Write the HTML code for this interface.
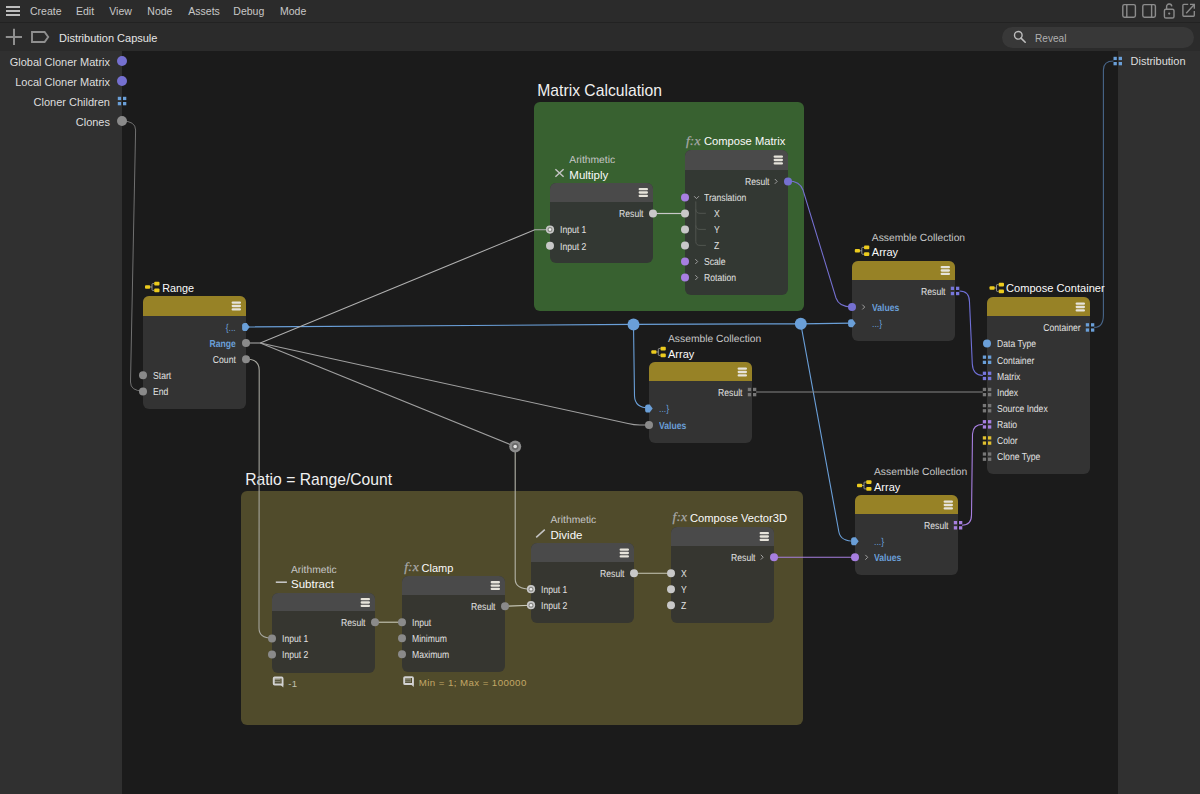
<!DOCTYPE html><html><head><meta charset="utf-8"><style>
html,body{margin:0;padding:0;width:1200px;height:794px;overflow:hidden;background:#1b1b1b;font-family:"Liberation Sans", sans-serif;}
.t{position:absolute;white-space:nowrap;line-height:1;}
.r{position:absolute;}
svg{position:absolute;left:0;top:0;}
</style></head><body>
<div class="r" style="left:0.00px;top:0.00px;width:1200.00px;height:22.00px;background:#2b2b2b;"></div>
<div class="r" style="left:0.00px;top:22.00px;width:1200.00px;height:1.00px;background:#222222;"></div>
<div class="r" style="left:0.00px;top:23.00px;width:1200.00px;height:28.00px;background:#2b2b2b;"></div>
<div class="r" style="left:0.00px;top:51.00px;width:122.00px;height:743.00px;background:#303030;"></div>
<div class="r" style="left:1118.00px;top:51.00px;width:82.00px;height:743.00px;background:#303030;"></div>
<div class="r" style="left:6.00px;top:6.00px;width:14.00px;height:2.00px;background:#bdbdbd;"></div>
<div class="r" style="left:6.00px;top:10.00px;width:14.00px;height:2.00px;background:#bdbdbd;"></div>
<div class="r" style="left:6.00px;top:14.00px;width:14.00px;height:2.00px;background:#bdbdbd;"></div>
<div class="t" style="left:30.00px;top:6.11px;font-size:10.5px;color:#c8c8c8;font-weight:normal;">Create</div>
<div class="t" style="left:76.00px;top:6.11px;font-size:10.5px;color:#c8c8c8;font-weight:normal;">Edit</div>
<div class="t" style="left:109.30px;top:6.11px;font-size:10.5px;color:#c8c8c8;font-weight:normal;">View</div>
<div class="t" style="left:147.30px;top:6.11px;font-size:10.5px;color:#c8c8c8;font-weight:normal;">Node</div>
<div class="t" style="left:188.30px;top:6.11px;font-size:10.5px;color:#c8c8c8;font-weight:normal;">Assets</div>
<div class="t" style="left:233.30px;top:6.11px;font-size:10.5px;color:#c8c8c8;font-weight:normal;">Debug</div>
<div class="t" style="left:280.00px;top:6.11px;font-size:10.5px;color:#c8c8c8;font-weight:normal;">Mode</div>
<div class="t" style="left:59.00px;top:32.69px;font-size:11px;color:#e6e6e6;font-weight:normal;">Distribution Capsule</div>
<div class="r" style="left:534px;top:102px;width:270px;height:209px;background:#386130;border-radius:6px"></div>
<div class="t" style="left:537.30px;top:82.71px;font-size:15.7px;color:#f0f0f0;font-weight:normal;">Matrix Calculation</div>
<div class="r" style="left:241px;top:491px;width:562px;height:234px;background:#504b2b;border-radius:6px"></div>
<div class="t" style="left:245.20px;top:471.71px;font-size:15.7px;color:#f0f0f0;font-weight:normal;">Ratio = Range/Count</div>
<div class="t" style="right:1090.00px;top:56.69px;font-size:11px;color:#dedede;font-weight:normal;text-align:right;">Global Cloner Matrix</div>
<div class="t" style="right:1090.00px;top:76.69px;font-size:11px;color:#dedede;font-weight:normal;text-align:right;">Local Cloner Matrix</div>
<div class="t" style="right:1090.00px;top:96.69px;font-size:11px;color:#dedede;font-weight:normal;text-align:right;">Cloner Children</div>
<div class="t" style="right:1090.00px;top:116.69px;font-size:11px;color:#dedede;font-weight:normal;text-align:right;">Clones</div>
<div class="t" style="left:1130.50px;top:56.49px;font-size:11px;color:#dedede;font-weight:normal;">Distribution</div>
<div class="r" style="left:1002px;top:27px;width:192px;height:21px;background:#383838;border-radius:11px"></div>
<div class="t" style="left:1035.00px;top:33.65px;font-size:10.1px;color:#b0b0b0;font-weight:normal;">Reveal</div>
<svg width="1200" height="794" viewBox="0 0 1200 794"><path d="M122 121 Q135.6 121 135.6 130 L130.5 382 Q130.5 391 143 391" stroke="#707070" stroke-width="1.0" fill="none" opacity="1"/><path d="M246 327 L633.5 324.4 L800.8 323.8 L852 323.2" stroke="#6a9fd8" stroke-width="1.2" fill="none" opacity="1"/><path d="M633.5 324.4 L634.5 396 Q635 408 649 408" stroke="#6a9fd8" stroke-width="1.1" fill="none" opacity="1"/><path d="M800.8 323.8 L838.9 532 Q840.5 541.3 855 541.3" stroke="#6a9fd8" stroke-width="1.1" fill="none" opacity="1"/><path d="M246 343 L260.3 343 L534.8 229.8 L550 229.8" stroke="#b0b0b0" stroke-width="1.1" fill="none" opacity="1"/><path d="M260.3 343 L628 423.5 Q634 425 640 425 L649 425" stroke="#a0a0a0" stroke-width="1.05" fill="none" opacity="1"/><path d="M260.3 343 L515.2 446.5" stroke="#a0a0a0" stroke-width="1.1" fill="none" opacity="1"/><path d="M246 359 Q259.2 359 259.2 370 L259 628 Q259 638.2 272 638.2" stroke="#a8a8a0" stroke-width="1.05" fill="none" opacity="1"/><path d="M515.2 446.5 L515.2 579 Q515.2 589.2 531 589.2" stroke="#b4b4a8" stroke-width="1.1" fill="none" opacity="1"/><path d="M653 213.5 L685 213.5" stroke="#c8c8c8" stroke-width="1.2" fill="none" opacity="1"/><path d="M788 181 Q800 181 803 190 L836 298 Q839 307 852 307" stroke="#7570d0" stroke-width="1.05" fill="none" opacity="1"/><path d="M959.5 291 Q969.5 291 969.5 302 L972.3 364 Q973 375.5 982.8 375.5" stroke="#7070d8" stroke-width="1.1" fill="none" opacity="1"/><path d="M756 392 L982.8 392" stroke="#858585" stroke-width="1.1" fill="none" opacity="1"/><path d="M962 525.2 Q971.5 525.2 971.5 515 L972.5 434 Q973 424.4 982.8 424.4" stroke="#a77fe0" stroke-width="1.1" fill="none" opacity="1"/><path d="M1094.2 327.4 Q1103.4 327.4 1103.4 315 L1103.4 70 Q1103.4 61 1113.5 61" stroke="#48668a" stroke-width="1.1" fill="none" opacity="1"/><path d="M374.5 622.2 L402 622.2" stroke="#c8c8b8" stroke-width="1.1" fill="none" opacity="1"/><path d="M505 606.2 L531 605.2" stroke="#c8c8b8" stroke-width="1.1" fill="none" opacity="1"/><path d="M634 573.2 L671 573.2" stroke="#c8c8b8" stroke-width="1.1" fill="none" opacity="1"/><path d="M773 557.3 L855 557.3" stroke="#a77fe0" stroke-width="1.1" fill="none" opacity="1"/></svg>
<div class="r" style="left:143px;top:296px;width:103px;height:112.50px;background:#333333;border-radius:6px;overflow:hidden"><div style="height:20.00px;background:#978226"></div></div>
<div class="t" style="right:964.00px;top:323.89px;font-size:10.05px;color:#6a9fd8;font-weight:normal;text-align:right;transform:scaleX(0.856);transform-origin:right center;text-rendering:geometricPrecision;">{...</div>
<div class="t" style="right:964.00px;top:339.99px;font-size:10.05px;color:#6a9fd8;font-weight:bold;text-align:right;transform:scaleX(0.856);transform-origin:right center;text-rendering:geometricPrecision;">Range</div>
<div class="t" style="right:964.00px;top:356.09px;font-size:10.05px;color:#e2e2e2;font-weight:normal;text-align:right;transform:scaleX(0.856);transform-origin:right center;text-rendering:geometricPrecision;">Count</div>
<div class="t" style="left:153.00px;top:372.19px;font-size:10.05px;color:#e2e2e2;font-weight:normal;transform:scaleX(0.856);transform-origin:left center;text-rendering:geometricPrecision;">Start</div>
<div class="t" style="left:153.00px;top:388.29px;font-size:10.05px;color:#e2e2e2;font-weight:normal;transform:scaleX(0.856);transform-origin:left center;text-rendering:geometricPrecision;">End</div>
<div class="r" style="left:550px;top:182.5px;width:103px;height:80.00px;background:#333833;border-radius:6px;overflow:hidden"><div style="height:19.50px;background:#4a4a4a"></div></div>
<div class="t" style="right:557.00px;top:210.39px;font-size:10.05px;color:#e2e2e2;font-weight:normal;text-align:right;transform:scaleX(0.856);transform-origin:right center;text-rendering:geometricPrecision;">Result</div>
<div class="t" style="left:560.00px;top:226.49px;font-size:10.05px;color:#e2e2e2;font-weight:normal;transform:scaleX(0.856);transform-origin:left center;text-rendering:geometricPrecision;">Input 1</div>
<div class="t" style="left:560.00px;top:242.59px;font-size:10.05px;color:#e2e2e2;font-weight:normal;transform:scaleX(0.856);transform-origin:left center;text-rendering:geometricPrecision;">Input 2</div>
<div class="r" style="left:685px;top:150px;width:103px;height:145.00px;background:#333833;border-radius:6px;overflow:hidden"><div style="height:19.60px;background:#4a4a4a"></div></div>
<div class="t" style="right:431.00px;top:178.29px;font-size:10.05px;color:#e2e2e2;font-weight:normal;text-align:right;transform:scaleX(0.856);transform-origin:right center;text-rendering:geometricPrecision;">Result</div>
<div class="t" style="left:704.00px;top:194.32px;font-size:10.05px;color:#e2e2e2;font-weight:normal;transform:scaleX(0.856);transform-origin:left center;text-rendering:geometricPrecision;">Translation</div>
<div class="t" style="left:713.50px;top:210.35px;font-size:10.05px;color:#e2e2e2;font-weight:normal;transform:scaleX(0.856);transform-origin:left center;text-rendering:geometricPrecision;">X</div>
<div class="t" style="left:713.50px;top:226.38px;font-size:10.05px;color:#e2e2e2;font-weight:normal;transform:scaleX(0.856);transform-origin:left center;text-rendering:geometricPrecision;">Y</div>
<div class="t" style="left:713.50px;top:242.41px;font-size:10.05px;color:#e2e2e2;font-weight:normal;transform:scaleX(0.856);transform-origin:left center;text-rendering:geometricPrecision;">Z</div>
<div class="t" style="left:704.00px;top:258.44px;font-size:10.05px;color:#e2e2e2;font-weight:normal;transform:scaleX(0.856);transform-origin:left center;text-rendering:geometricPrecision;">Scale</div>
<div class="t" style="left:704.00px;top:274.47px;font-size:10.05px;color:#e2e2e2;font-weight:normal;transform:scaleX(0.856);transform-origin:left center;text-rendering:geometricPrecision;">Rotation</div>
<div class="r" style="left:852px;top:260.5px;width:103px;height:80.00px;background:#333333;border-radius:6px;overflow:hidden"><div style="height:19.50px;background:#978226"></div></div>
<div class="t" style="right:254.50px;top:287.79px;font-size:10.05px;color:#e2e2e2;font-weight:normal;text-align:right;transform:scaleX(0.856);transform-origin:right center;text-rendering:geometricPrecision;">Result</div>
<div class="t" style="left:871.50px;top:303.94px;font-size:10.05px;color:#6a9fd8;font-weight:bold;transform:scaleX(0.856);transform-origin:left center;text-rendering:geometricPrecision;">Values</div>
<div class="t" style="left:871.50px;top:320.09px;font-size:10.05px;color:#6a9fd8;font-weight:normal;transform:scaleX(0.856);transform-origin:left center;text-rendering:geometricPrecision;">...}</div>
<div class="r" style="left:987px;top:297px;width:103px;height:176.50px;background:#333333;border-radius:6px;overflow:hidden"><div style="height:19.00px;background:#978226"></div></div>
<div class="t" style="right:119.50px;top:324.29px;font-size:10.05px;color:#e2e2e2;font-weight:normal;text-align:right;transform:scaleX(0.856);transform-origin:right center;text-rendering:geometricPrecision;">Container</div>
<div class="t" style="left:997.00px;top:340.44px;font-size:10.05px;color:#e2e2e2;font-weight:normal;transform:scaleX(0.856);transform-origin:left center;text-rendering:geometricPrecision;">Data Type</div>
<div class="t" style="left:997.00px;top:356.59px;font-size:10.05px;color:#e2e2e2;font-weight:normal;transform:scaleX(0.856);transform-origin:left center;text-rendering:geometricPrecision;">Container</div>
<div class="t" style="left:997.00px;top:372.74px;font-size:10.05px;color:#e2e2e2;font-weight:normal;transform:scaleX(0.856);transform-origin:left center;text-rendering:geometricPrecision;">Matrix</div>
<div class="t" style="left:997.00px;top:388.89px;font-size:10.05px;color:#e2e2e2;font-weight:normal;transform:scaleX(0.856);transform-origin:left center;text-rendering:geometricPrecision;">Index</div>
<div class="t" style="left:997.00px;top:405.04px;font-size:10.05px;color:#e2e2e2;font-weight:normal;transform:scaleX(0.856);transform-origin:left center;text-rendering:geometricPrecision;">Source Index</div>
<div class="t" style="left:997.00px;top:421.19px;font-size:10.05px;color:#e2e2e2;font-weight:normal;transform:scaleX(0.856);transform-origin:left center;text-rendering:geometricPrecision;">Ratio</div>
<div class="t" style="left:997.00px;top:437.34px;font-size:10.05px;color:#e2e2e2;font-weight:normal;transform:scaleX(0.856);transform-origin:left center;text-rendering:geometricPrecision;">Color</div>
<div class="t" style="left:997.00px;top:453.49px;font-size:10.05px;color:#e2e2e2;font-weight:normal;transform:scaleX(0.856);transform-origin:left center;text-rendering:geometricPrecision;">Clone Type</div>
<div class="r" style="left:649px;top:362px;width:103px;height:80.60px;background:#333333;border-radius:6px;overflow:hidden"><div style="height:19.20px;background:#978226"></div></div>
<div class="t" style="right:457.50px;top:388.89px;font-size:10.05px;color:#e2e2e2;font-weight:normal;text-align:right;transform:scaleX(0.856);transform-origin:right center;text-rendering:geometricPrecision;">Result</div>
<div class="t" style="left:658.50px;top:405.39px;font-size:10.05px;color:#6a9fd8;font-weight:normal;transform:scaleX(0.856);transform-origin:left center;text-rendering:geometricPrecision;">...}</div>
<div class="t" style="left:658.50px;top:421.89px;font-size:10.05px;color:#6a9fd8;font-weight:bold;transform:scaleX(0.856);transform-origin:left center;text-rendering:geometricPrecision;">Values</div>
<div class="r" style="left:855px;top:495px;width:103px;height:80.00px;background:#333333;border-radius:6px;overflow:hidden"><div style="height:19.00px;background:#978226"></div></div>
<div class="t" style="right:251.50px;top:522.09px;font-size:10.05px;color:#e2e2e2;font-weight:normal;text-align:right;transform:scaleX(0.856);transform-origin:right center;text-rendering:geometricPrecision;">Result</div>
<div class="t" style="left:874.00px;top:538.14px;font-size:10.05px;color:#6a9fd8;font-weight:normal;transform:scaleX(0.856);transform-origin:left center;text-rendering:geometricPrecision;">...}</div>
<div class="t" style="left:874.00px;top:554.19px;font-size:10.05px;color:#6a9fd8;font-weight:bold;transform:scaleX(0.856);transform-origin:left center;text-rendering:geometricPrecision;">Values</div>
<div class="r" style="left:272px;top:592.5px;width:103px;height:80.10px;background:#363630;border-radius:6px;overflow:hidden"><div style="height:18.70px;background:#4a4a4a"></div></div>
<div class="t" style="right:835.00px;top:619.09px;font-size:10.05px;color:#e2e2e2;font-weight:normal;text-align:right;transform:scaleX(0.856);transform-origin:right center;text-rendering:geometricPrecision;">Result</div>
<div class="t" style="left:282.00px;top:635.29px;font-size:10.05px;color:#e2e2e2;font-weight:normal;transform:scaleX(0.856);transform-origin:left center;text-rendering:geometricPrecision;">Input 1</div>
<div class="t" style="left:282.00px;top:651.49px;font-size:10.05px;color:#e2e2e2;font-weight:normal;transform:scaleX(0.856);transform-origin:left center;text-rendering:geometricPrecision;">Input 2</div>
<div class="r" style="left:402px;top:575.6px;width:103px;height:96.00px;background:#363630;border-radius:6px;overflow:hidden"><div style="height:19.40px;background:#4a4a4a"></div></div>
<div class="t" style="right:705.00px;top:603.09px;font-size:10.05px;color:#e2e2e2;font-weight:normal;text-align:right;transform:scaleX(0.856);transform-origin:right center;text-rendering:geometricPrecision;">Result</div>
<div class="t" style="left:412.00px;top:619.14px;font-size:10.05px;color:#e2e2e2;font-weight:normal;transform:scaleX(0.856);transform-origin:left center;text-rendering:geometricPrecision;">Input</div>
<div class="t" style="left:412.00px;top:635.19px;font-size:10.05px;color:#e2e2e2;font-weight:normal;transform:scaleX(0.856);transform-origin:left center;text-rendering:geometricPrecision;">Minimum</div>
<div class="t" style="left:412.00px;top:651.24px;font-size:10.05px;color:#e2e2e2;font-weight:normal;transform:scaleX(0.856);transform-origin:left center;text-rendering:geometricPrecision;">Maximum</div>
<div class="r" style="left:531px;top:543px;width:103px;height:80.00px;background:#363630;border-radius:6px;overflow:hidden"><div style="height:19.00px;background:#4a4a4a"></div></div>
<div class="t" style="right:576.00px;top:570.09px;font-size:10.05px;color:#e2e2e2;font-weight:normal;text-align:right;transform:scaleX(0.856);transform-origin:right center;text-rendering:geometricPrecision;">Result</div>
<div class="t" style="left:541.00px;top:586.09px;font-size:10.05px;color:#e2e2e2;font-weight:normal;transform:scaleX(0.856);transform-origin:left center;text-rendering:geometricPrecision;">Input 1</div>
<div class="t" style="left:541.00px;top:602.09px;font-size:10.05px;color:#e2e2e2;font-weight:normal;transform:scaleX(0.856);transform-origin:left center;text-rendering:geometricPrecision;">Input 2</div>
<div class="r" style="left:671px;top:526.5px;width:103px;height:96.50px;background:#363630;border-radius:6px;overflow:hidden"><div style="height:19.50px;background:#4a4a4a"></div></div>
<div class="t" style="right:445.00px;top:554.09px;font-size:10.05px;color:#e2e2e2;font-weight:normal;text-align:right;transform:scaleX(0.856);transform-origin:right center;text-rendering:geometricPrecision;">Result</div>
<div class="t" style="left:681.00px;top:570.14px;font-size:10.05px;color:#e2e2e2;font-weight:normal;transform:scaleX(0.856);transform-origin:left center;text-rendering:geometricPrecision;">X</div>
<div class="t" style="left:681.00px;top:586.19px;font-size:10.05px;color:#e2e2e2;font-weight:normal;transform:scaleX(0.856);transform-origin:left center;text-rendering:geometricPrecision;">Y</div>
<div class="t" style="left:681.00px;top:602.24px;font-size:10.05px;color:#e2e2e2;font-weight:normal;transform:scaleX(0.856);transform-origin:left center;text-rendering:geometricPrecision;">Z</div>
<div class="t" style="left:162.30px;top:283.06px;font-size:10.8px;color:#fafafa;font-weight:normal;">Range</div>
<div class="t" style="left:569.30px;top:155.53px;font-size:10.3px;color:#c6c6c6;font-weight:normal;text-rendering:geometricPrecision;">Arithmetic</div>
<div class="t" style="left:569.30px;top:170.27px;font-size:11.5px;color:#fafafa;font-weight:normal;">Multiply</div>
<div class="t" style="left:703.90px;top:136.32px;font-size:11.2px;color:#fafafa;font-weight:normal;">Compose Matrix</div>
<div class="t" style="left:871.80px;top:233.83px;font-size:10.3px;color:#c6c6c6;font-weight:normal;text-rendering:geometricPrecision;">Assemble Collection</div>
<div class="t" style="left:871.80px;top:246.69px;font-size:11px;color:#fafafa;font-weight:normal;">Array</div>
<div class="t" style="left:1006.00px;top:283.10px;font-size:11.1px;color:#fafafa;font-weight:normal;">Compose Container</div>
<div class="t" style="left:668.00px;top:335.33px;font-size:10.3px;color:#c6c6c6;font-weight:normal;text-rendering:geometricPrecision;">Assemble Collection</div>
<div class="t" style="left:668.00px;top:348.69px;font-size:11px;color:#fafafa;font-weight:normal;">Array</div>
<div class="t" style="left:874.00px;top:468.33px;font-size:10.3px;color:#c6c6c6;font-weight:normal;text-rendering:geometricPrecision;">Assemble Collection</div>
<div class="t" style="left:874.00px;top:481.89px;font-size:11px;color:#fafafa;font-weight:normal;">Array</div>
<div class="t" style="left:291.00px;top:565.53px;font-size:10.3px;color:#c6c6c6;font-weight:normal;text-rendering:geometricPrecision;">Arithmetic</div>
<div class="t" style="left:291.00px;top:579.27px;font-size:11.5px;color:#fafafa;font-weight:normal;">Subtract</div>
<div class="t" style="left:421.50px;top:562.89px;font-size:11px;color:#fafafa;font-weight:normal;">Clamp</div>
<div class="t" style="left:550.50px;top:515.53px;font-size:10.3px;color:#c6c6c6;font-weight:normal;text-rendering:geometricPrecision;">Arithmetic</div>
<div class="t" style="left:550.50px;top:530.47px;font-size:11.5px;color:#fafafa;font-weight:normal;">Divide</div>
<div class="t" style="left:690.00px;top:513.12px;font-size:11.2px;color:#fafafa;font-weight:normal;">Compose Vector3D</div>
<div class="t" style="left:288.20px;top:678.67px;font-size:9.6px;color:#c0c0b0;font-weight:normal;letter-spacing:0.4px;">-1</div>
<div class="t" style="left:418.80px;top:678.39px;font-size:9.7px;color:#c2a766;font-weight:normal;letter-spacing:0.42px;">Min = 1; Max = 100000</div>
<div class="t" style="left:686.00px;top:133.87px;font-size:13.5px;color:#a8a8a8;font-weight:normal;font-family:'Liberation Serif',serif;font-style:italic;letter-spacing:0.1px;-webkit-text-stroke:0.25px #a8a8a8;">f:x</div>
<div class="t" style="left:404.20px;top:559.87px;font-size:13.5px;color:#a8a8a8;font-weight:normal;font-family:'Liberation Serif',serif;font-style:italic;letter-spacing:0.1px;-webkit-text-stroke:0.25px #a8a8a8;">f:x</div>
<div class="t" style="left:672.60px;top:510.47px;font-size:13.5px;color:#a8a8a8;font-weight:normal;font-family:'Liberation Serif',serif;font-style:italic;letter-spacing:0.1px;-webkit-text-stroke:0.25px #a8a8a8;">f:x</div>
<svg width="1200" height="794" viewBox="0 0 1200 794"><rect x="231.60" y="301.50" width="9.4" height="2.3" rx="1.1" fill="#e6e3da"/><rect x="231.60" y="304.85" width="9.4" height="2.3" rx="1.1" fill="#e6e3da"/><rect x="231.60" y="308.20" width="9.4" height="2.3" rx="1.1" fill="#e6e3da"/><path d="M249.70 327.00 L246.70 331.00 H244.70 Q242.10 331.00 242.10 328.40 V325.60 Q242.10 323.00 244.70 323.00 H246.70 Z" fill="#6a9fd8"/><circle cx="246" cy="343.1" r="4" fill="#8a8a8a"/><circle cx="246" cy="359.2" r="4" fill="#8a8a8a"/><circle cx="143" cy="375.3" r="4" fill="#8a8a8a"/><circle cx="143" cy="391.4" r="4" fill="#8a8a8a"/><rect x="638.60" y="188.00" width="9.4" height="2.3" rx="1.1" fill="#e6e3da"/><rect x="638.60" y="191.35" width="9.4" height="2.3" rx="1.1" fill="#e6e3da"/><rect x="638.60" y="194.70" width="9.4" height="2.3" rx="1.1" fill="#e6e3da"/><circle cx="653" cy="213.5" r="4" fill="#c8c8c8"/><circle cx="550" cy="229.6" r="4.1" fill="#c8c8c8"/><circle cx="550" cy="229.6" r="2.5" fill="#8a8a86"/><circle cx="550" cy="229.6" r="1.3" fill="#f0f0f0"/><circle cx="550" cy="245.7" r="4" fill="#c8c8c8"/><rect x="773.60" y="155.50" width="9.4" height="2.3" rx="1.1" fill="#e6e3da"/><rect x="773.60" y="158.85" width="9.4" height="2.3" rx="1.1" fill="#e6e3da"/><rect x="773.60" y="162.20" width="9.4" height="2.3" rx="1.1" fill="#e6e3da"/><path d="M774.8 179.0 L777.2 181.4 L774.8 183.8" stroke="#a0a0a0" stroke-width="1" fill="none"/><circle cx="788" cy="181.4" r="4" fill="#7570d0"/><path d="M694.1 196.23000000000002 L696.5 198.63 L698.9 196.23000000000002" stroke="#a0a0a0" stroke-width="1" fill="none"/><circle cx="685" cy="197.43" r="4" fill="#a77fe0"/><circle cx="685" cy="213.46" r="4" fill="#c8c8c8"/><circle cx="685" cy="229.49" r="4" fill="#c8c8c8"/><circle cx="685" cy="245.52" r="4" fill="#c8c8c8"/><path d="M695.3 259.15000000000003 L697.7 261.55 L695.3 263.95" stroke="#a0a0a0" stroke-width="1" fill="none"/><circle cx="685" cy="261.55" r="4" fill="#a77fe0"/><path d="M695.3 275.18 L697.7 277.58 L695.3 279.97999999999996" stroke="#a0a0a0" stroke-width="1" fill="none"/><circle cx="685" cy="277.58" r="4" fill="#a77fe0"/><rect x="940.60" y="266.00" width="9.4" height="2.3" rx="1.1" fill="#e6e3da"/><rect x="940.60" y="269.35" width="9.4" height="2.3" rx="1.1" fill="#e6e3da"/><rect x="940.60" y="272.70" width="9.4" height="2.3" rx="1.1" fill="#e6e3da"/><rect x="950.80" y="286.70" width="3.3" height="3.3" fill="#7777dd"/><rect x="950.80" y="291.90" width="3.3" height="3.3" fill="#7777dd"/><rect x="956.00" y="286.70" width="3.3" height="3.3" fill="#7777dd"/><rect x="956.00" y="291.90" width="3.3" height="3.3" fill="#7777dd"/><path d="M862.3 304.65000000000003 L864.7 307.05 L862.3 309.45" stroke="#a0a0a0" stroke-width="1" fill="none"/><circle cx="852" cy="307.05" r="4" fill="#7570d0"/><path d="M855.70 323.20 L852.70 327.20 H850.70 Q848.10 327.20 848.10 324.60 V321.80 Q848.10 319.20 850.70 319.20 H852.70 Z" fill="#6a9fd8"/><rect x="1075.60" y="302.50" width="9.4" height="2.3" rx="1.1" fill="#e6e3da"/><rect x="1075.60" y="305.85" width="9.4" height="2.3" rx="1.1" fill="#e6e3da"/><rect x="1075.60" y="309.20" width="9.4" height="2.3" rx="1.1" fill="#e6e3da"/><rect x="1085.80" y="323.20" width="3.3" height="3.3" fill="#6a9fd8"/><rect x="1085.80" y="328.40" width="3.3" height="3.3" fill="#6a9fd8"/><rect x="1091.00" y="323.20" width="3.3" height="3.3" fill="#6a9fd8"/><rect x="1091.00" y="328.40" width="3.3" height="3.3" fill="#6a9fd8"/><circle cx="987" cy="343.55" r="4" fill="#6a9fd8"/><rect x="982.80" y="355.50" width="3.3" height="3.3" fill="#6a9fd8"/><rect x="982.80" y="360.70" width="3.3" height="3.3" fill="#6a9fd8"/><rect x="988.00" y="355.50" width="3.3" height="3.3" fill="#6a9fd8"/><rect x="988.00" y="360.70" width="3.3" height="3.3" fill="#6a9fd8"/><rect x="982.80" y="371.65" width="3.3" height="3.3" fill="#7777dd"/><rect x="982.80" y="376.85" width="3.3" height="3.3" fill="#7777dd"/><rect x="988.00" y="371.65" width="3.3" height="3.3" fill="#7777dd"/><rect x="988.00" y="376.85" width="3.3" height="3.3" fill="#7777dd"/><rect x="982.80" y="387.80" width="3.3" height="3.3" fill="#777777"/><rect x="982.80" y="393.00" width="3.3" height="3.3" fill="#777777"/><rect x="988.00" y="387.80" width="3.3" height="3.3" fill="#777777"/><rect x="988.00" y="393.00" width="3.3" height="3.3" fill="#777777"/><rect x="982.80" y="403.95" width="3.3" height="3.3" fill="#777777"/><rect x="982.80" y="409.15" width="3.3" height="3.3" fill="#777777"/><rect x="988.00" y="403.95" width="3.3" height="3.3" fill="#777777"/><rect x="988.00" y="409.15" width="3.3" height="3.3" fill="#777777"/><rect x="982.80" y="420.10" width="3.3" height="3.3" fill="#a77fe0"/><rect x="982.80" y="425.30" width="3.3" height="3.3" fill="#a77fe0"/><rect x="988.00" y="420.10" width="3.3" height="3.3" fill="#a77fe0"/><rect x="988.00" y="425.30" width="3.3" height="3.3" fill="#a77fe0"/><rect x="982.80" y="436.25" width="3.3" height="3.3" fill="#e0c030"/><rect x="982.80" y="441.45" width="3.3" height="3.3" fill="#e0c030"/><rect x="988.00" y="436.25" width="3.3" height="3.3" fill="#e0c030"/><rect x="988.00" y="441.45" width="3.3" height="3.3" fill="#e0c030"/><rect x="982.80" y="452.40" width="3.3" height="3.3" fill="#777777"/><rect x="982.80" y="457.60" width="3.3" height="3.3" fill="#777777"/><rect x="988.00" y="452.40" width="3.3" height="3.3" fill="#777777"/><rect x="988.00" y="457.60" width="3.3" height="3.3" fill="#777777"/><rect x="737.60" y="367.50" width="9.4" height="2.3" rx="1.1" fill="#e6e3da"/><rect x="737.60" y="370.85" width="9.4" height="2.3" rx="1.1" fill="#e6e3da"/><rect x="737.60" y="374.20" width="9.4" height="2.3" rx="1.1" fill="#e6e3da"/><rect x="747.80" y="387.80" width="3.3" height="3.3" fill="#777777"/><rect x="747.80" y="393.00" width="3.3" height="3.3" fill="#777777"/><rect x="753.00" y="387.80" width="3.3" height="3.3" fill="#777777"/><rect x="753.00" y="393.00" width="3.3" height="3.3" fill="#777777"/><path d="M652.70 408.50 L649.70 412.50 H647.70 Q645.10 412.50 645.10 409.90 V407.10 Q645.10 404.50 647.70 404.50 H649.70 Z" fill="#6a9fd8"/><circle cx="649" cy="425.0" r="4" fill="#8a8a8a"/><rect x="943.60" y="500.50" width="9.4" height="2.3" rx="1.1" fill="#e6e3da"/><rect x="943.60" y="503.85" width="9.4" height="2.3" rx="1.1" fill="#e6e3da"/><rect x="943.60" y="507.20" width="9.4" height="2.3" rx="1.1" fill="#e6e3da"/><rect x="953.80" y="521.00" width="3.3" height="3.3" fill="#a77fe0"/><rect x="953.80" y="526.20" width="3.3" height="3.3" fill="#a77fe0"/><rect x="959.00" y="521.00" width="3.3" height="3.3" fill="#a77fe0"/><rect x="959.00" y="526.20" width="3.3" height="3.3" fill="#a77fe0"/><path d="M858.70 541.25 L855.70 545.25 H853.70 Q851.10 545.25 851.10 542.65 V539.85 Q851.10 537.25 853.70 537.25 H855.70 Z" fill="#6a9fd8"/><path d="M865.3 554.9 L867.7 557.3 L865.3 559.6999999999999" stroke="#a0a0a0" stroke-width="1" fill="none"/><circle cx="855" cy="557.3" r="4" fill="#a77fe0"/><rect x="360.60" y="598.00" width="9.4" height="2.3" rx="1.1" fill="#e6e3da"/><rect x="360.60" y="601.35" width="9.4" height="2.3" rx="1.1" fill="#e6e3da"/><rect x="360.60" y="604.70" width="9.4" height="2.3" rx="1.1" fill="#e6e3da"/><circle cx="375" cy="622.2" r="4" fill="#8a8a8a"/><circle cx="272" cy="638.4" r="4" fill="#8a8a8a"/><circle cx="272" cy="654.6" r="4" fill="#8a8a8a"/><rect x="490.60" y="581.10" width="9.4" height="2.3" rx="1.1" fill="#e6e3da"/><rect x="490.60" y="584.45" width="9.4" height="2.3" rx="1.1" fill="#e6e3da"/><rect x="490.60" y="587.80" width="9.4" height="2.3" rx="1.1" fill="#e6e3da"/><circle cx="505" cy="606.2" r="4" fill="#8a8a8a"/><circle cx="402" cy="622.25" r="4" fill="#8a8a8a"/><circle cx="402" cy="638.3" r="4" fill="#8a8a8a"/><circle cx="402" cy="654.35" r="4" fill="#8a8a8a"/><rect x="619.60" y="548.50" width="9.4" height="2.3" rx="1.1" fill="#e6e3da"/><rect x="619.60" y="551.85" width="9.4" height="2.3" rx="1.1" fill="#e6e3da"/><rect x="619.60" y="555.20" width="9.4" height="2.3" rx="1.1" fill="#e6e3da"/><circle cx="634" cy="573.2" r="4" fill="#c8c8c8"/><circle cx="531" cy="589.2" r="4.1" fill="#c8c8c8"/><circle cx="531" cy="589.2" r="2.5" fill="#8a8a86"/><circle cx="531" cy="589.2" r="1.3" fill="#f0f0f0"/><circle cx="531" cy="605.2" r="4.1" fill="#c8c8c8"/><circle cx="531" cy="605.2" r="2.5" fill="#8a8a86"/><circle cx="531" cy="605.2" r="1.3" fill="#f0f0f0"/><rect x="759.60" y="532.00" width="9.4" height="2.3" rx="1.1" fill="#e6e3da"/><rect x="759.60" y="535.35" width="9.4" height="2.3" rx="1.1" fill="#e6e3da"/><rect x="759.60" y="538.70" width="9.4" height="2.3" rx="1.1" fill="#e6e3da"/><path d="M760.8 554.8000000000001 L763.2 557.2 L760.8 559.6" stroke="#a0a0a0" stroke-width="1" fill="none"/><circle cx="774" cy="557.2" r="4" fill="#a77fe0"/><circle cx="671" cy="573.25" r="4" fill="#c8c8c8"/><circle cx="671" cy="589.3" r="4" fill="#c8c8c8"/><circle cx="671" cy="605.35" r="4" fill="#c8c8c8"/><circle cx="122" cy="61" r="5" fill="#7570d0"/><circle cx="122" cy="81" r="5" fill="#7570d0"/><rect x="117.80" y="96.80" width="3.3" height="3.3" fill="#6a9fd8"/><rect x="117.80" y="102.00" width="3.3" height="3.3" fill="#6a9fd8"/><rect x="123.00" y="96.80" width="3.3" height="3.3" fill="#6a9fd8"/><rect x="123.00" y="102.00" width="3.3" height="3.3" fill="#6a9fd8"/><circle cx="122" cy="121" r="5" fill="#8a8a8a"/><rect x="1113.50" y="56.80" width="3.3" height="3.3" fill="#6a9fd8"/><rect x="1113.50" y="62.00" width="3.3" height="3.3" fill="#6a9fd8"/><rect x="1118.70" y="56.80" width="3.3" height="3.3" fill="#6a9fd8"/><rect x="1118.70" y="62.00" width="3.3" height="3.3" fill="#6a9fd8"/><circle cx="633.5" cy="324.4" r="6" fill="#6a9fd8"/><circle cx="800.8" cy="323.8" r="6" fill="#6a9fd8"/><circle cx="515.2" cy="446.5" r="6" fill="#8c8c8c"/><circle cx="515.2" cy="446.5" r="3.4" fill="#686868"/><circle cx="515.2" cy="446.5" r="1.8" fill="#e4e4e4"/><rect x="1122.8" y="4.6" width="12.6" height="12.6" rx="1.6" stroke="#8c8c8c" stroke-width="1.4" fill="none"/><line x1="1126.8" y1="4.6" x2="1126.8" y2="17.2" stroke="#8c8c8c" stroke-width="1.4"/><rect x="1142.8" y="4.6" width="12.6" height="12.6" rx="1.6" stroke="#8c8c8c" stroke-width="1.4" fill="none"/><line x1="1151.6" y1="4.6" x2="1151.6" y2="17.2" stroke="#8c8c8c" stroke-width="1.4"/><rect x="1164.4" y="9.2" width="9.6" height="8.8" rx="1.6" stroke="#8c8c8c" stroke-width="1.4" fill="none"/><path d="M1166.6 9.2 V6.8 A2.6 2.6 0 0 1 1171.8 6.4" stroke="#8c8c8c" stroke-width="1.4" fill="none"/><circle cx="1169.2" cy="13.6" r="1.1" fill="#8c8c8c"/><path d="M1188.2 4.4 H1183.8 Q1182.9 4.4 1182.9 5.3 V15.3 Q1182.9 16.2 1183.8 16.2 H1193.4 Q1194.3 16.2 1194.3 15.3 V11" stroke="#8c8c8c" stroke-width="1.35" fill="none"/><path d="M1186.2 13.2 L1193.8 5 M1190 4.4 H1194.3 V8.8" stroke="#8c8c8c" stroke-width="1.35" fill="none"/><path d="M5.8 37 H22 M14 28.8 V45" stroke="#8f8f8f" stroke-width="2" fill="none"/><path d="M32 32 H44.6 L48.2 37 L44.6 42 H32 Z" stroke="#8f8f8f" stroke-width="1.9" fill="none"/><circle cx="1018.3" cy="35.3" r="3.8" stroke="#bdbdbd" stroke-width="1.4" fill="none"/><path d="M1021 38.1 L1025.2 42.2" stroke="#bdbdbd" stroke-width="1.6" stroke-linecap="round"/><rect x="145" y="285.2" width="5.2" height="3.6" rx="1" fill="#eccb1e"/><path d="M150.2 287 H152 M154.2 283.6 H152.7 Q152 283.6 152 284.3 V289.7 Q152 290.4 152.7 290.4 H154.2" stroke="#a8a8a8" stroke-width="0.8" fill="none"/><rect x="154.2" y="281.7" width="5.3" height="3.8" rx="1" fill="#eccb1e"/><rect x="154.2" y="288.4" width="5.3" height="3.8" rx="1" fill="#eccb1e"/><rect x="854.8" y="249.0" width="5.2" height="3.6" rx="1" fill="#eccb1e"/><path d="M860.0 250.8 H861.8 M864.0 247.4 H862.5 Q861.8 247.4 861.8 248.10000000000002 V253.5 Q861.8 254.20000000000002 862.5 254.20000000000002 H864.0" stroke="#a8a8a8" stroke-width="0.8" fill="none"/><rect x="864.0" y="245.5" width="5.3" height="3.8" rx="1" fill="#eccb1e"/><rect x="864.0" y="252.20000000000002" width="5.3" height="3.8" rx="1" fill="#eccb1e"/><rect x="651.3" y="350.2" width="5.2" height="3.6" rx="1" fill="#eccb1e"/><path d="M656.5 352 H658.3 M660.5 348.6 H659.0 Q658.3 348.6 658.3 349.3 V354.7 Q658.3 355.4 659.0 355.4 H660.5" stroke="#a8a8a8" stroke-width="0.8" fill="none"/><rect x="660.5" y="346.7" width="5.3" height="3.8" rx="1" fill="#eccb1e"/><rect x="660.5" y="353.4" width="5.3" height="3.8" rx="1" fill="#eccb1e"/><rect x="857" y="483.7" width="5.2" height="3.6" rx="1" fill="#eccb1e"/><path d="M862.2 485.5 H864 M866.2 482.1 H864.7 Q864 482.1 864 482.8 V488.2 Q864 488.9 864.7 488.9 H866.2" stroke="#a8a8a8" stroke-width="0.8" fill="none"/><rect x="866.2" y="480.2" width="5.3" height="3.8" rx="1" fill="#eccb1e"/><rect x="866.2" y="486.9" width="5.3" height="3.8" rx="1" fill="#eccb1e"/><rect x="989.5" y="286.2" width="5.2" height="3.6" rx="1" fill="#eccb1e"/><path d="M994.7 288 H996.5 M998.7 284.6 H997.2 Q996.5 284.6 996.5 285.3 V290.7 Q996.5 291.4 997.2 291.4 H998.7" stroke="#a8a8a8" stroke-width="0.8" fill="none"/><rect x="998.7" y="282.7" width="5.3" height="3.8" rx="1" fill="#eccb1e"/><rect x="998.7" y="289.4" width="5.3" height="3.8" rx="1" fill="#eccb1e"/><path d="M555.4 169.2 L563.6 176.8 M563.6 169.2 L555.4 176.8" stroke="#c4c4c4" stroke-width="1.5"/><path d="M275.8 582.2 H286.9" stroke="#c4c4c4" stroke-width="1.6"/><path d="M536.2 537.4 L544.8 529.6" stroke="#c4c4c4" stroke-width="1.5"/><rect x="273.90000000000003" y="677.7" width="6.6" height="5" fill="#8c8a76"/><rect x="274.40000000000003" y="680.1" width="5.6" height="1" fill="#55533d"/><rect x="274.40000000000003" y="682.1" width="5.6" height="1" fill="#55533d"/><rect x="273.75" y="677.5500000000001" width="8.8" height="6.9" rx="0.9" stroke="#d2d2d2" stroke-width="1.9" fill="none"/><path d="M280.2 684.4 L283.3 687.4 L283.5 683.8000000000001 Z" fill="#d2d2d2"/><rect x="404.3" y="677.3000000000001" width="6.6" height="5" fill="#8c8a76"/><rect x="404.8" y="679.7" width="5.6" height="1" fill="#55533d"/><rect x="404.8" y="681.7" width="5.6" height="1" fill="#55533d"/><rect x="404.15" y="677.1500000000001" width="8.8" height="6.9" rx="0.9" stroke="#d2d2d2" stroke-width="1.9" fill="none"/><path d="M410.59999999999997 684.0 L413.7 687.0 L413.9 683.4000000000001 Z" fill="#d2d2d2"/><path d="M695.8 201.4 V241.4 Q695.8 245.4 700 245.4 H705.9 M695.8 209.3 Q695.8 213.3 700 213.3 H705.9 M695.8 225.4 Q695.8 229.4 700 229.4 H705.9" stroke="#50544f" stroke-width="1" fill="none"/></svg>
</body></html>
